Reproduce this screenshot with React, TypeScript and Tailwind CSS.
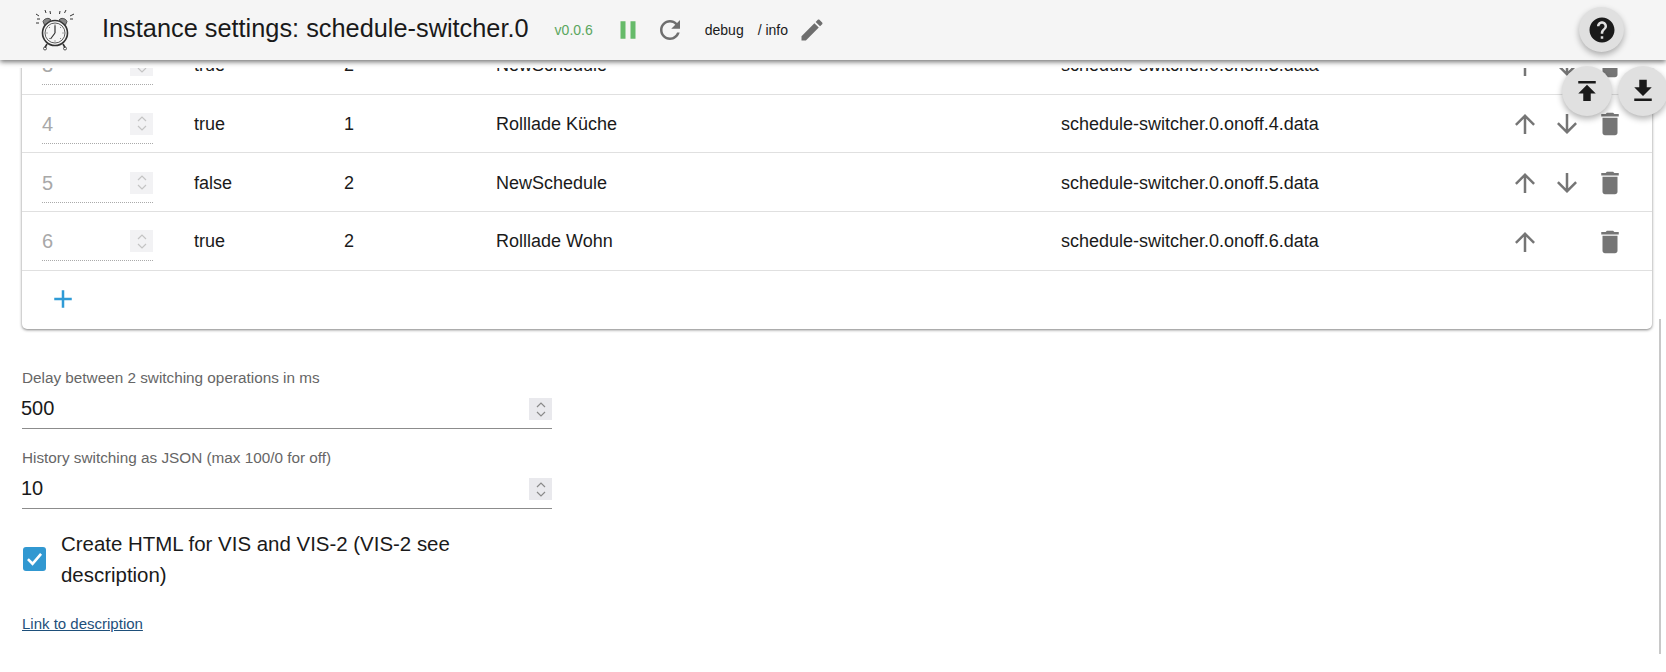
const FONT = "font-['Liberation_Sans',Arial,sans-serif]";

const paths = {
  up: "M4 12l1.41 1.41L11 7.83V20h2V7.83l5.58 5.59L20 12l-8-8-8 8z",
  down: "M20 12l-1.41-1.41L13 16.17V4h-2v12.17l-5.58-5.59L4 12l8 8 8-8z",
  trash: "M6 19c0 1.1.9 2 2 2h8c1.1 0 2-.9 2-2V7H6v12zM19 4h-3.5l-1-1h-5l-1 1H5v2h14V4z",
  add: "M19 13h-6v6h-2v-6H5v-2h6V5h2v6h6v2z",
  help: "M12 2C6.48 2 2 6.48 2 12s4.48 10 10 10 10-4.48 10-10S17.52 2 12 2zm1 17h-2v-2h2v2zm2.07-7.75l-.9.92C13.45 12.9 13 13.5 13 15h-2v-.5c0-1.1.45-2.1 1.17-2.83l1.24-1.26c.37-.36.59-.86.59-1.41 0-1.1-.9-2-2-2s-2 .9-2 2H8c0-2.21 1.79-4 4-4s4 1.79 4 4c0 .88-.36 1.68-.93 2.25z",
  publish: "M5 4v2h14V4H5zm0 10h4v6h6v-6h4l-7-7-7 7z",
  download: "M19 9h-4V3H9v6H5l7 7 7-7zM5 18v2h14v-2H5z",
  refresh: "M17.65 6.35C16.2 4.9 14.21 4 12 4c-4.42 0-7.99 3.58-7.99 8s3.57 8 7.99 8c3.73 0 6.84-2.55 7.73-6h-2.08c-.82 2.33-3.04 4-5.65 4-3.31 0-6-2.69-6-6s2.69-6 6-6c1.66 0 3.14.69 4.22 1.78L13 11h7V4l-2.35 2.35z",
  pause: "M6 19h4V5H6v14zm8-14v14h4V5h-4z",
  edit: "M3 17.25V21h3.75L17.81 9.94l-3.75-3.75L3 17.25zM20.71 7.04c.39-.39.39-1.02 0-1.41l-2.34-2.34c-.39-.39-1.02-.39-1.41 0l-1.83 1.83 3.75 3.75 1.83-1.83z",
};

const Icon = ({ d, className }: { d: string; className: string }) => (
  <svg viewBox="0 0 24 24" fill="currentColor" className={className}>
    <path d={d} />
  </svg>
);

const AlarmClock = () => (
  <svg viewBox="0 0 40 42" fill="none" stroke="#333" strokeWidth="1" className="w-[40px] h-[42px]">
    <circle cx="20" cy="24" r="12.5" strokeWidth="1.6" />
    <circle cx="20" cy="24" r="10" strokeWidth="0.8" />
    <path d="M20 24V16.5M20 24l-4.5 6" strokeWidth="1.2" />
    <path d="M20 15.5v1M20 31.5v1M11.5 24h1M27.5 24h1M14 18l.7.7M26 18l-.7.7M14 30l.7-.7M26 30l-.7-.7" strokeWidth="0.8" />
    <path d="M8 12.5c1-3 6-4.500 8-1.500l-6.500 5z" fill="#888" strokeWidth="0.8" />
    <path d="M32 12.500c-1-3-6-4.500-8-1.500l6.500 5z" fill="#888" strokeWidth="0.8" />
    <path d="M12 35l-2 3.500M28 35l2 3.500" strokeWidth="1.6" />
    <circle cx="10" cy="39.500" r="1.500" strokeWidth="0.8" />
    <circle cx="30" cy="39.500" r="1.500" strokeWidth="0.8" />
    <path d="M2 10h3M1 5l3 2M10 1l1 3M15 2l.500 3M25 2l-.500 3M31 1l-1.500 3M39 5l-4 2M38 10h-3M4 14H1" strokeWidth="1" />
  </svg>
);

const Spinner = ({ className, stroke }: { className: string; stroke: string }) => (
  <div className={`flex flex-col items-center justify-center gap-[3px] ${className}`}>
    <svg viewBox="0 0 10 6" fill="none" stroke={stroke} strokeWidth="1.2" className="w-[10px] h-[6px]">
      <path d="M1 5l4-4 4 4" />
    </svg>
    <svg viewBox="0 0 10 6" fill="none" stroke={stroke} strokeWidth="1.2" className="w-[10px] h-[6px]">
      <path d="M1 1l4 4 4-4" />
    </svg>
  </div>
);

const rows = [
  { no: 3, active: "true", count: 2, name: "NewSchedule", id: "schedule-switcher.0.onoff.3.data", down: true },
  { no: 4, active: "true", count: 1, name: "Rolllade Küche", id: "schedule-switcher.0.onoff.4.data", down: true },
  { no: 5, active: "false", count: 2, name: "NewSchedule", id: "schedule-switcher.0.onoff.5.data", down: true },
  { no: 6, active: "true", count: 2, name: "Rolllade Wohn", id: "schedule-switcher.0.onoff.6.data", down: false },
];

const NumberField = ({ label, value }: { label: string; value: string }) => (
  <div className="w-[530px] ml-[22px]">
    <div className="text-[15.3px] leading-[16px] text-[#666]">{label}</div>
    <div className="flex items-center justify-between h-[38px] mt-[5px] border-b border-[#8c8c8c]">
      <span className="text-[20px] leading-[24px] text-[#1a1a1a] -ml-[1px] -mt-[2px]">{value}</span>
      <Spinner className="w-[23px] h-[22px] bg-[#e9e9ed]" stroke="#8a8a8a" />
    </div>
  </div>
);

export default function App() {
  return (
    <div className={`relative h-[672px] w-[1666px] overflow-hidden bg-white ${FONT}`}>
      <header className="relative z-10 flex items-center h-[60px] bg-[#f5f5f5] shadow-[0_2px_5px_rgba(0,0,0,0.55)] text-[#1a1a1a]">
        <div className="ml-[35px] w-[67px]">
          <AlarmClock />
        </div>
        <h1 className="text-[25.33px] leading-[28px] font-normal -mt-[4px] whitespace-nowrap">
          Instance settings: schedule-switcher.0
        </h1>
        <span className="ml-[26px] text-[14px] text-[#5aa65e]">v0.0.6</span>
        <Icon d={paths.pause} className="ml-[20px] w-[30px] h-[30px] text-[#66bb6a]" />
        <Icon d={paths.refresh} className="ml-[12px] w-[30px] h-[30px] text-[#6e6e6e]" />
        <span className="ml-[20px] text-[14px]">debug</span>
        <span className="ml-[14px] text-[14px]">/ info</span>
        <Icon d={paths.edit} className="ml-[10px] w-[28px] h-[28px] text-[#6e6e6e]" />
      </header>

      {/* the table is scrolled: row 3 is cut off a little below the header */}
      <div className="mt-[8px] h-[604px] overflow-hidden">
        <main className="-mt-[32px]">
          <div className="ml-[22px] w-[1630px] rounded-b-[5px] bg-white shadow-[0_1px_3px_rgba(0,0,0,0.5)]">
            {rows.map((r) => (
              <div
                key={r.no}
                className="grid grid-cols-[172px_150px_152px_565px_1fr] items-center h-[58.67px] pt-[2px] border-b border-[#e0e0e0] text-[18px] text-[#1a1a1a]"
              >
                <div className="ml-[20px] w-[111px] h-[39px] flex items-center justify-between border-b border-dotted border-[#aaa]">
                  <span className="text-[20px] text-[#a8a8a8]">{r.no}</span>
                  <Spinner className="w-[23px] h-[22px] bg-[#f2f2f4]" stroke="#c4c4c4" />
                </div>
                <div>{r.active}</div>
                <div>{r.count}</div>
                <div>{r.name}</div>
                <div className="flex items-center justify-between">
                  <span className="whitespace-nowrap">{r.id}</span>
                  <div className="flex pr-[21px] text-[#757575]">
                    <div className="w-[42.5px] flex justify-center">
                      <Icon d={paths.up} className="w-[30px] h-[30px]" />
                    </div>
                    <div className="w-[42.5px] flex justify-center">
                      {r.down && <Icon d={paths.down} className="w-[30px] h-[30px]" />}
                    </div>
                    <div className="w-[42.5px] flex justify-center">
                      <Icon d={paths.trash} className="w-[30px] h-[30px]" />
                    </div>
                  </div>
                </div>
              </div>
            ))}
            <div className="h-[58px] flex items-center pl-[26px] -mb-[1px]">
              <Icon d={paths.add} className="w-[30px] h-[30px] -mt-[2px] text-[#2f9bd6]" />
            </div>
          </div>

          <div className="mt-[42px]">
            <NumberField label="Delay between 2 switching operations in ms" value="500" />
          </div>
          <div className="mt-[21px]">
            <NumberField label="History switching as JSON (max 100/0 for off)" value="10" />
          </div>

          <div className="flex items-center ml-[23px] mt-[19px] w-[450px]">
            <div className="shrink-0 flex items-center justify-center w-[23px] h-[24px] rounded-[3px] bg-[#3198d1]">
              <svg viewBox="0 0 16 16" fill="none" stroke="white" strokeWidth="2" className="w-[21px] h-[21px]">
                <path d="M3 8.500l3.500 3.500L13 4.500" />
              </svg>
            </div>
            <div className="ml-[15px] text-[20.45px] leading-[31px] text-[#1a1a1a]">
              Create HTML for VIS and VIS-2 (VIS-2 see description)
            </div>
          </div>

          <a className="block ml-[22px] mt-[26px] text-[15px] leading-[16px] text-[#1e4f7a] underline">
            Link to description
          </a>
        </main>
      </div>

      <div className="absolute left-[1659px] top-[319px] w-[2px] h-[335px] bg-[#c8c8c8]" />

      <button className="absolute z-20 left-[1579px] top-[7px] w-[45px] h-[45px] rounded-full flex items-center justify-center bg-[#e0e0e0] shadow-[0_3px_6px_rgba(0,0,0,0.3)] text-[#1a1a1a]">
        <Icon d={paths.help} className="w-[30px] h-[30px]" />
      </button>
      <button className="absolute z-20 left-[1562px] top-[66px] w-[50px] h-[50px] rounded-full flex items-center justify-center bg-[#e0e0e0] shadow-[0_3px_6px_rgba(0,0,0,0.3)] text-[#1a1a1a]">
        <Icon d={paths.publish} className="w-[30px] h-[30px]" />
      </button>
      <button className="absolute z-20 left-[1618px] top-[66px] w-[50px] h-[50px] rounded-full flex items-center justify-center bg-[#e0e0e0] shadow-[0_3px_6px_rgba(0,0,0,0.3)] text-[#1a1a1a]">
        <Icon d={paths.download} className="w-[30px] h-[30px]" />
      </button>
    </div>
  );
}
